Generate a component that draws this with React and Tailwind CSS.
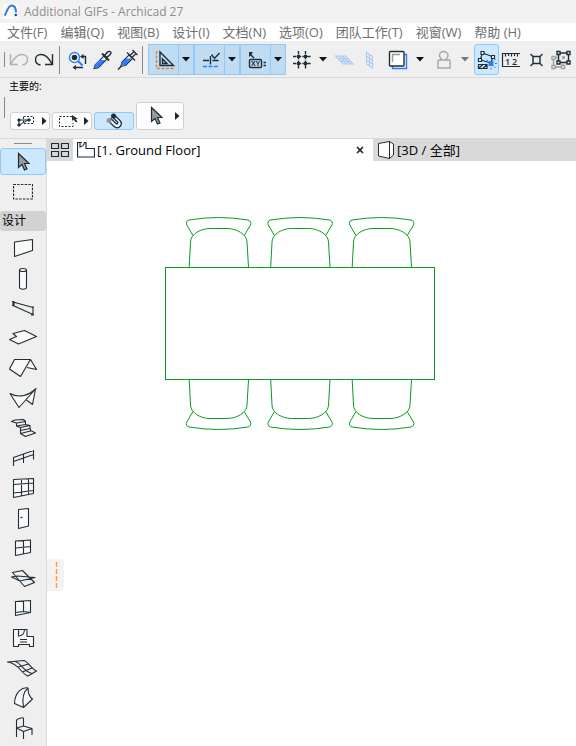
import React from 'react';

const DARK = '#1f2d36';
const BLUE = '#2b7fff';
const FACE = '#f9f9f9';

const menus = ['文件(F)', '编辑(Q)', '视图(B)', '设计(I)', '文档(N)', '选项(O)', '团队工作(T)', '视窗(W)', '帮助 (H)'];

const Caret = ({ color = '#111' }) => (
    <svg width="8" height="5" viewBox="0 0 8 5" className="shrink-0" aria-hidden="true">
        <path d="M0 0h8L4 4.5z" fill={color} />
    </svg>
);

const RightCaret = () => (
    <svg width="5" height="8" viewBox="0 0 5 8" className="shrink-0" aria-hidden="true">
        <path d="M0 0v8l4.5-4z" fill="#222" />
    </svg>
);

// 25x31 glyph box, same size as a toolbar button
const Glyph = ({ children, w = 25 }) => (
    <svg width={w} height="31" viewBox={`0 0 ${w} 31`} fill="none" stroke={DARK} strokeWidth="1.4" className="shrink-0" aria-hidden="true">
        {children}
    </svg>
);

const ToolButton = ({ label, className = '', children }) => (
    <button type="button" aria-label={label} className={`flex h-[31px] w-[25px] shrink-0 items-center justify-center ${className}`}>
        {children}
    </button>
);

const DropButton = ({ label, color }) => (
    <button type="button" aria-label={label} className="flex h-[31px] w-[18px] shrink-0 items-center justify-center">
        <Caret color={color} />
    </button>
);

const SplitButton = ({ label, children }) => (
    <div className="flex h-[31px] w-[46px] shrink-0 border border-[#90c8f6] bg-[#c0dcf3]">
        <button type="button" aria-label={label} className="-m-px flex w-[31px] shrink-0 items-center justify-center">
            {children}
        </button>
        <button type="button" aria-label={`${label} options`} className="flex flex-1 items-center justify-center border-l border-[#90c8f6]">
            <Caret />
        </button>
    </div>
);

const Toolbar = () => (
    <div className="flex items-center overflow-hidden border-b border-[#d9d9d9] bg-[#efefef] pt-[3px] pb-0.5">
        <div className="ml-1 mr-px h-[15px] w-px shrink-0 bg-[#8a8a8a]" />
        <ToolButton label="Undo">
            <Glyph>
                <path stroke="#b0b0b0" d="M4.5 10v10.500h7.500M5 20C8 14 12 10.500 16 10.500c3 0 5.500 2 5.500 5s-2 5-5 5.500" />
            </Glyph>
        </ToolButton>
        <ToolButton label="Redo">
            <Glyph>
                <path d="M21.500 10v10.500h-7.500M21 20C18 14 14 10.500 10 10.500c-3 0-5.500 2-5.500 5s2 5 5 5.500" />
            </Glyph>
        </ToolButton>
        <div className="ml-[3px] mr-[5px] h-7 w-px shrink-0 bg-[#8a8a8a]" />
        <ToolButton label="Find and select">
            <Glyph>
                <circle cx="9.500" cy="13.500" r="5" stroke={BLUE} fill="#fff" />
                <circle cx="9.500" cy="13.500" r="2.800" fill={DARK} stroke="none" />
                <path d="M13 17l4.500 4.500" stroke={BLUE} strokeWidth="2" />
                <path d="M20.500 20v-7.500h-3M18 23.500h-8" />
                <path d="M18.500 10l-3.500 2.500 3.500 2.500zM11 21l-3.500 2.500 3.500 2.500z" fill={DARK} stroke="none" />
            </Glyph>
        </ToolButton>
        <ToolButton label="Pick up parameters">
            <Glyph>
                <path d="M4 24.500l1-3.500 9-9 3 3-9 9z" fill="#fff" strokeWidth="1.100" />
                <path d="M4.500 24l1-3 4-4.500h5l-7 7z" fill={BLUE} stroke={BLUE} strokeWidth="1" />
                <path d="M12 9.500l7 7" strokeWidth="1.800" />
                <path d="M14.500 11.500l3-3.500c1-1 3.500-1 3.500 1 0 1.500-3 3.500-4 4.500z" fill="#dfe3e6" />
            </Glyph>
        </ToolButton>
        <ToolButton label="Inject parameters">
            <Glyph>
                <path d="M3 25.500l4-4" />
                <path d="M6 22l1-4 7-7 3.500 3.500-7 7z" fill="#fff" strokeWidth="1.100" />
                <path d="M6.500 21.500l1-3 3.500-3.500h5l-6 6z" fill={BLUE} stroke={BLUE} strokeWidth="1" />
                <path d="M12 8.500l8 8M15 11.500l4-4M17 13.500l4-4M17.500 6l5 5" strokeWidth="1.200" />
            </Glyph>
        </ToolButton>
        <div className="ml-0.5 mr-[5px] h-7 w-px shrink-0 bg-[#8a8a8a]" />
        <SplitButton label="Guide lines">
            <Glyph w={31}>
                <path d="M8.500 7v17.500H26" stroke="#f47b20" strokeDasharray="3 1.500" />
                <path d="M12 8v13.500h13.500zM14.500 15v4.500h4.500z" />
            </Glyph>
        </SplitButton>
        <SplitButton label="Snap guides">
            <Glyph w={31}>
                <path d="M9 16.500h6M18.500 16.500h6M16.500 12v8.500M17.500 10.500l3 4 5-5.500" />
                <path d="M9 22.500h16" stroke={BLUE} strokeDasharray="4 1.500" />
            </Glyph>
        </SplitButton>
        <SplitButton label="Tracker">
            <Glyph w={31}>
                <path d="M9 8v5l1.500-1.500 3 3 1-1-3-3L13 8z" fill={DARK} stroke="none" />
                <rect x="9.500" y="15.500" width="12" height="8" rx="1" />
                <text x="15.500" y="22" textAnchor="middle" fontSize="7" fontWeight="700" fill={DARK} stroke="none">XY</text>
                <path d="M23.500 18.500h2.500M23.500 21.500h2.500" />
            </Glyph>
        </SplitButton>
        <ToolButton label="Grid snap" className="ml-[3px]">
            <Glyph>
                <path d="M9.500 7v18M16.500 7v18M4 12.500h18M4 19.500h18" strokeDasharray="3.500 1.200" />
                <path d="M8 11h3v3H8zM15 11h3v3h-3zM8 18h3v3H8zM15 18h3v3h-3z" fill={DARK} stroke="none" />
            </Glyph>
        </ToolButton>
        <DropButton label="Grid snap options" />
        <ToolButton label="Editing plane" className="ml-0.5">
            <Glyph>
                <path d="M1.500 12h10l7.500 8H9zM4 14.700h10M6.500 17.400h10M5 12l7.500 8M8.300 12l7.500 8" stroke="#a9c8f3" strokeWidth="1.100" />
            </Glyph>
        </ToolButton>
        <ToolButton label="Vertical plane">
            <Glyph>
                <path d="M7.500 8.500l6 4V24l-6-4zM7.500 12.500l6 4M7.500 16l6 4M10.500 10.500v11.500" stroke="#a9c8f3" strokeWidth="1.100" />
            </Glyph>
        </ToolButton>
        <ToolButton label="Trace reference" className="ml-0.5">
            <Glyph>
                <path d="M18.500 10.500h2v14H6.500v-2.500" stroke={BLUE} />
                <rect x="3.500" y="7.500" width="14.500" height="14.500" rx="1" fill="#fff" />
                <path d="M6.500 18v-7.500H14" stroke="#999" />
            </Glyph>
        </ToolButton>
        <DropButton label="Trace options" />
        <ToolButton label="Gravity" className="ml-0.5">
            <Glyph>
                <path stroke="#a6a6a6" d="M10.500 16c0-2-2-2-2-4.500C8.500 9 10.500 7.500 12.500 7.500s4.500 1.500 4.500 4c0 2.500-2 2.500-2 4.500M8 16h10c1 0 1 1 1 1v7H7v-7s0-1 1-1z" />
            </Glyph>
        </ToolButton>
        <DropButton label="Gravity options" color="#777" />
        <ToolButton label="Suspend groups" className="rounded-[3px] border border-[#90c8f6] bg-[#cce8ff]">
            <Glyph>
                <path d="M10 9.500l8 3M6.500 15l1.500-4.500M7 16l8 2.500M18.500 14l-1 3" strokeWidth="1.200" />
                <path d="M7 7.500h3v3H7zM17.500 11.500h3v3h-3zM4.500 14.500h3v3h-3z" fill="#fff" strokeWidth="1.200" />
                <path d="M4.500 20.500h8.500v4H4.500zM5 24l4-3.500M9 24.500l4-4" strokeWidth="1.200" />
                <path d="M14.500 17h5v5h-5z" fill={BLUE} stroke="none" />
                <path d="M12.500 15.500l1.500 1.500M21.500 15l-1.500 1.500M21.500 24l-1.500-1.500M17 23.500v2M21 19.500h2" stroke={BLUE} strokeWidth="1" />
            </Glyph>
        </ToolButton>
        <ToolButton label="Measure">
            <Glyph>
                <path d="M21 9.500H3.500v13H21M6.500 9.500v3M9.500 9.500v2.500M12.500 9.500v3M15.500 9.500v2.500M18.500 9.500v3" strokeWidth="1.200" />
                <text x="6" y="21" fontSize="9" fontWeight="600" fill={DARK} stroke="none">1</text>
                <text x="13" y="21" fontSize="9" fontWeight="600" fill={DARK} stroke="none">2</text>
            </Glyph>
        </ToolButton>
        <ToolButton label="Marker">
            <Glyph>
                <path d="M9 12.500h7v7H9zM6.500 10l2.500 2.500M18.500 10L16 12.500M6.500 22L9 19.500M18.500 22L16 19.500" />
            </Glyph>
        </ToolButton>
        <ToolButton label="Resize">
            <Glyph>
                <path d="M4.500 13.500v9.500h9M4.500 13.500h4M14 23v-3" stroke="#a0a0a0" />
                <path d="M3 12.500h3v3H3zM3 21.500h3v3H3zM12.500 21.500h3v3h-3z" fill="#fff" stroke="#a0a0a0" />
                <path d="M9.500 9h10v9.500h-10z" />
                <path d="M8 7.500h3v3H8zM18 7.500h3v3h-3zM8 17h3v3H8zM18 17h3v3h-3z" fill="#fff" />
                <circle cx="14.500" cy="13.500" r="1" stroke="#a0a0a0" />
            </Glyph>
        </ToolButton>
    </div>
);

const Pointer = () => (
    <svg width="14" height="20" viewBox="0 0 14 20" className="shrink-0" aria-hidden="true">
        <path d="M2.500 1.500v14l3.500-3 2.500 5.500 2.500-1-2.500-5.500h4.500z" fill="#9a9a9a" stroke={DARK} strokeWidth="1.200" />
    </svg>
);

const InfoButton = ({ label, active, children }) => (
    <button
        type="button"
        aria-label={label}
        className={`flex h-[18px] w-10 shrink-0 items-center rounded-[3px] border ${active ? 'justify-center border-[#90c8f6] bg-[#cce8ff]' : 'justify-between border-[#d0d0d0] bg-[#fdfdfd] pr-0.5 pl-1.5'}`}
    >
        {children}
    </button>
);

const InfoBox = () => (
    <div className="h-[61px] border-b border-[#d9d9d9] bg-[#efefef]">
        <div className="pl-[9px] text-[10px] leading-4 text-black">主要的:</div>
        <div className="flex items-end pt-[3px] pl-1">
            <div className="mr-[5px] mb-3 h-[21px] w-px bg-[#8a8a8a]" />
            <div className="flex items-end gap-0.5">
                <InfoButton label="Selection method">
                    <svg width="17" height="12" viewBox="0 0 17 12" fill="none" stroke={DARK} className="shrink-0" aria-hidden="true">
                        <path d="M6.500 1.500h10v7h-10z" strokeDasharray="2 1.500" />
                        <path d="M2 10l10-5.500M2 10V5h10" />
                        <path d="M1 4h2v2H1zM1 9h2v2H1zM11 4h2v2h-2z" fill={DARK} />
                    </svg>
                    <RightCaret />
                </InfoButton>
                <InfoButton label="Marquee method">
                    <svg width="19" height="12" viewBox="0 0 19 12" fill="none" stroke={DARK} className="shrink-0" aria-hidden="true">
                        <path d="M13 1.500H.5v10h13.500V8" strokeDasharray="2 1.500" />
                        <path d="M13 0v6l1.500-1.500 2.500 3 1.500-1L16.500 4H19z" fill={DARK} stroke="none" />
                    </svg>
                    <RightCaret />
                </InfoButton>
                <InfoButton label="Quick selection" active>
                    <svg width="18" height="16" viewBox="0 0 18 16" fill="none" stroke={DARK} strokeWidth="1.200" className="shrink-0" aria-hidden="true">
                        <path d="M9.500 2l5 5c2.500 2.500 2 5 .5 6.500s-4 2-6.500-.5l-5-5L6 5.500l5 5c1 1 2.500-.5 1.500-1.500l-5-5z" fill="#e4f2fd" />
                        <circle cx="8.500" cy="3" r="2.500" fill={DARK} stroke="none" />
                        <circle cx="4" cy="7.500" r="2.500" fill="#8f979d" stroke="none" />
                    </svg>
                </InfoButton>
                <button type="button" aria-label="Arrow tool" className="flex h-7 w-12 items-center justify-center gap-3 rounded-[3px] border border-[#d0d0d0] bg-[#fdfdfd] pl-2">
                    <Pointer />
                    <RightCaret />
                </button>
            </div>
        </div>
    </div>
);

const tools = [
    { name: 'Wall', art: <path fill={FACE} d="M14.500 9l18-2.500v11l-18 6z" /> },
    { name: 'Column', art: <path fill={FACE} d="M19.500 7v17c0 3 7 3 7 0V7c0-2-7-2-7 0s7 2 7 0" /> },
    { name: 'Beam', art: <path d="M12 8.500h2v4h-2M13 8.500v4M13 9l20 5.500M13 12.500l20 9M32 14h2M33 14v8M31 22h3" /> },
    { name: 'Slab', art: <path fill={FACE} d="M13 10.500l11.500-3 12 6-18 7.500-9-4.500 7-3z" /> },
    { name: 'Roof', art: <path fill={FACE} d="M14.500 6.500h16l-10 17-11-7.500zM30.500 6.500l6 10-9.500-2" /> },
    { name: 'Shell', art: <path fill={FACE} d="M10 10.500c9 5 19 2 26-5L19 24.500zM35.500 6l-3 15.500-6-4.500" /> },
    { name: 'Stair', art: <path d="M11.500 8.500L15 7l8.500-.5 2 2-9 1.500zM16.500 10v3l9-1.500v-3M16.500 13l4 1.500v3l9.500-2v-3l-4.500-1M20.500 14.500l9.500-2M20.500 17.500v3l10-2.500v-2.500M20.500 20.500l5 3 10-3.500-5-2.500" /> },
    { name: 'Railing', art: <path d="M13.500 14v9M23.500 10.500v9.500M33.500 7v9.500M13.500 14.500l20-7M13.500 18.500l20-7" /> },
    { name: 'Curtain wall', art: <path fill={FACE} d="M13.500 6.500l20-1v15l-20 4zM21.500 6v17M28.500 5.500v16M13.500 11.500l20-1.500M13.500 20l20-2.500" /> },
    { name: 'Door', art: <path fill={FACE} d="M18.500 6.500l10-1v17.500l-10 2.500zM20.500 15l2-1" /> },
    { name: 'Window', art: <path fill={FACE} d="M15.500 8l15-1v12.500l-15 3zM23.500 7.500v13.500M15.500 15l15-1.500" /> },
    { name: 'Skylight', art: <path d="M12.500 9.500l10-2 12 12-10 4zM11.500 14l6-1 17.500 1.500-15 3.500z" /> },
    { name: 'Corner window', art: <path fill={FACE} d="M15.500 8.500l15-1v12l-15 3zM23.500 8v10.500l7 1M15.500 19.500l8-1" /> },
    { name: 'Zone', art: <path fill={FACE} d="M13.500 6.500h5v6.500c4 0 6-3 6-6.500h2.500v7h6.500v10h-4v-2h-11v2h-5zM18.500 6.500h6M20 16.500h7M20 19h7" /> },
    { name: 'Mesh', art: <path d="M7.500 9l16.500-1.500c4 1 7 8 12.500 10.500l-8.500 5C22 22 19 10 7.500 9zM15.500 8.500c6 2 7 9 16.500 12M18 14l10.500-3M22.500 19l9.500-4" /> },
    { name: 'Morph', art: <path fill={FACE} d="M14.500 20.500l9 4 9-8.500c-3-2-4.500-6-4.500-11-5-1-13 3-13.500 15.500zM28 5c-5 4-6 11-4.500 19.500" /> },
    { name: 'Object', art: <path d="M16.500 24V7.500c0-1.500 7-4 7-2V13l8.500 2.500-8.500 3-7-3.500 7-2M32 15.500v6.500M23.500 18.500v7.500" /> },
];

const Toolbox = () => (
    <nav aria-label="Toolbox" className="w-[47px] shrink-0 border-r border-[#d9d9d9] bg-[#efefef]">
        <div className="mx-auto mt-1 mb-1 h-px w-[18px] bg-[#8a8a8a]" />
        <button type="button" aria-label="Arrow" className="flex h-[27px] w-full items-center justify-center rounded-[3px] border border-[#90c8f6] bg-[#cce8ff]">
            <Pointer />
        </button>
        <button type="button" aria-label="Marquee" className="mt-0.5 mb-1 flex h-[30px] w-full items-center justify-center">
            <svg width="20" height="16" viewBox="0 0 20 16" fill="none" stroke={DARK} strokeWidth="1.200" aria-hidden="true">
                <path d="M.5 .5h19v14.500H.5z" strokeDasharray="2.500 1.200" />
            </svg>
        </button>
        <h2 className="mb-0.5 h-5 rounded-[3px] bg-[#d2d2d2] pl-0.5 text-xs leading-5 text-black">设计</h2>
        {tools.map((tool) => (
            <button key={tool.name} type="button" aria-label={tool.name} className="flex h-[30px] w-full items-center">
                <svg width="46" height="30" viewBox="0 0 46 30" fill="none" stroke={DARK} strokeWidth="1.100" strokeLinejoin="round" aria-hidden="true">
                    {tool.art}
                </svg>
            </button>
        ))}
    </nav>
);

const Tabs = () => (
    <div className="flex h-[22px] bg-[#d9d9d9] text-[13px] leading-[22px] text-black">
        <button type="button" aria-label="Tab overview" className="flex w-[26px] shrink-0 items-center justify-center">
            <svg width="18" height="14" viewBox="0 0 18 14" fill="none" stroke={DARK} strokeWidth="1.200" aria-hidden="true">
                <path d="M.5 .5h7v5h-7zM10.500 .5h7v5h-7zM.5 8.500h7v5h-7zM10.500 8.500h7v5h-7z" />
            </svg>
        </button>
        <div className="flex w-[300px] items-center bg-white pl-1">
            <svg width="18" height="16" viewBox="0 0 18 16" fill="none" stroke={DARK} strokeWidth="1.200" aria-hidden="true">
                <path d="M.5 .5h2.500v4.500c2.500-.5 4-2 4.500-4.500h1.500v6h8.500V15H.5zM3 .5h2" />
            </svg>
            <span className="ml-0.5 flex-1 whitespace-nowrap">[1. Ground Floor]</span>
            <button type="button" aria-label="Close tab" className="mr-[9px]">
                <svg width="8" height="8" viewBox="0 0 8 8" stroke="#222" strokeWidth="1.700" aria-hidden="true">
                    <path d="M1 1l6 6M7 1L1 7" />
                </svg>
            </button>
        </div>
        <div className="flex flex-1 items-center pl-[5px]">
            <svg width="16" height="18" viewBox="0 0 16 18" stroke={DARK} fill="#fff" aria-hidden="true">
                <path d="M.5 2.500l11-2v17l-11-2.500zM11.500 .5l4 2.500v11l-4 3.500z" />
            </svg>
            <span className="ml-[3px] whitespace-nowrap">[3D / 全部]</span>
        </div>
    </div>
);

const Chair = ({ transform }) => (
    <g transform={transform}>
        <path d="M28 18.500L21.800 8C21 6 21.500 3.500 24 3Q39 .5 53.500 .5T83 3C85.500 3.500 86.500 6 85.500 8L79.200 18.500" />
        <path d="M24.200 50L25.500 25C25.500 17 36 11.500 45 11.500H62C71 11.500 82 17 82 25L83.500 50" />
    </g>
);

const FloorPlan = () => (
    <svg width="270" height="213" viewBox="0 0 270 213" fill="none" stroke="#0a9b23" role="img" aria-label="Dining table with six chairs">
        {[0, 81.5, 163].map((x) => (
            <React.Fragment key={x}>
                <Chair transform={`translate(${x} 0)`} />
                <Chair transform={`translate(${x} 213) scale(1 -1)`} />
            </React.Fragment>
        ))}
        <rect x="0.500" y="50.500" width="269" height="112" />
    </svg>
);

export default function App() {
    return (
        <div className="flex min-h-screen flex-col bg-white font-['Open_Sans','Noto_Sans_CJK_SC',sans-serif]">
            <header className="flex h-[23px] items-center gap-1.5 bg-[#f2f2f2] pl-[3px] text-xs text-[#8c8c8c]">
                <svg width="15" height="15" viewBox="0 0 15 15" fill="none" aria-hidden="true">
                    <rect width="15" height="15" fill="#f8fafc" />
                    <path d="M1.500 11.500C3 10 5 1.500 8.500 1.500c3 0 4.500 3 4.500 7" stroke="#3a78d8" strokeWidth="2" />
                    <circle cx="12.800" cy="11" r="1.300" fill="#14469c" />
                </svg>
                <h1>Additional GIFs - Archicad 27</h1>
            </header>
            <nav className="flex h-[18px] items-center gap-[13px] overflow-hidden bg-white pl-[7px] text-[13px] leading-[18px] whitespace-nowrap text-[#6e6e6e]">
                {menus.map((menu) => (
                    <button key={menu} type="button">{menu}</button>
                ))}
            </nav>
            <Toolbar />
            <InfoBox />
            <div className="flex flex-1">
                <Toolbox />
                <main className="relative flex-1">
                    <Tabs />
                    <div className="pt-14 pl-[118px]">
                        <FloorPlan />
                    </div>
                    {/* docking handle floating over the canvas */}
                    <div className="absolute top-[420px] left-0 h-8 w-[17px] rounded-r bg-[#f2f2f2]">
                        <svg width="17" height="32" viewBox="0 0 17 32" aria-hidden="true">
                            <path d="M9.500 3v26" stroke="#ff9a45" strokeWidth="1.400" strokeDasharray="5 2" />
                        </svg>
                    </div>
                </main>
            </div>
        </div>
    );
}
